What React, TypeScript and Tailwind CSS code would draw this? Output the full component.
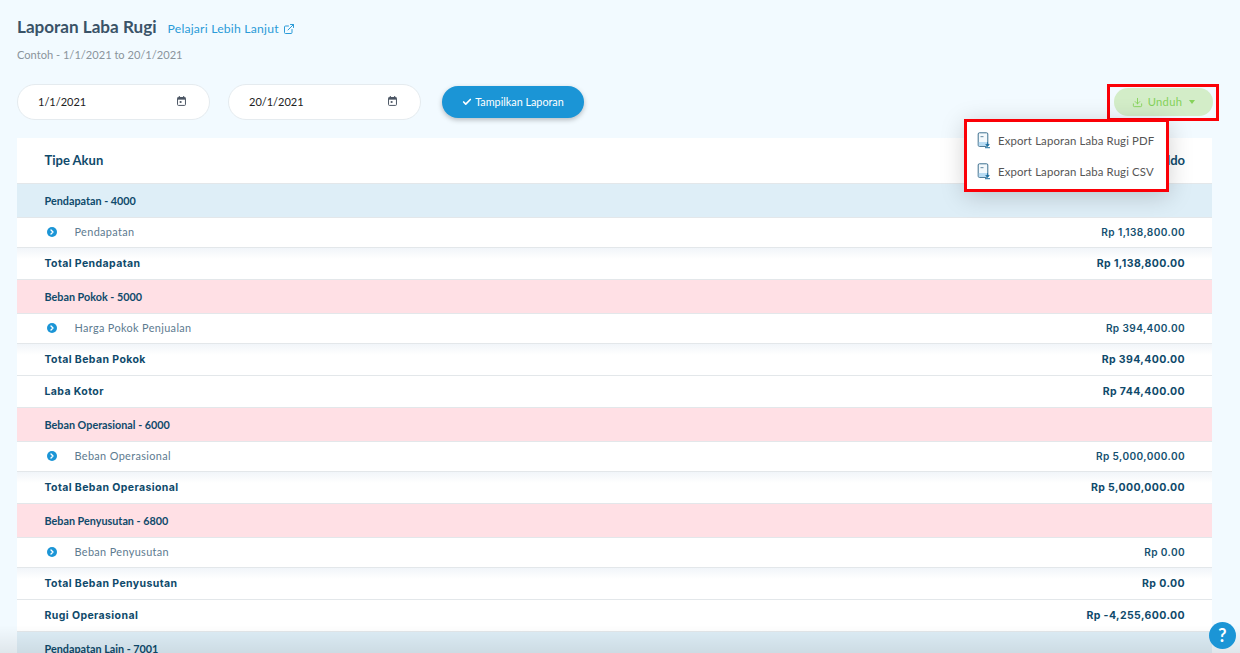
import { Check, ExternalLink, Download, ChevronRight } from "lucide-react";

const lato = { fontFamily: "Lato, sans-serif" };

function CalendarIcon() {
  return (
    <svg width="9" height="10" viewBox="0 0 10 11" className="mr-[5px] mb-[2px]">
      <rect x="0.6" y="1.6" width="8.8" height="8.8" rx="1" fill="none" stroke="#4b5563" strokeWidth="1.1" />
      <rect x="0.6" y="1.6" width="8.8" height="2.4" fill="#4b5563" />
      <rect x="2" y="0" width="1.2" height="2" fill="#4b5563" />
      <rect x="6.8" y="0" width="1.2" height="2" fill="#4b5563" />
      <rect x="3" y="5.6" width="2" height="2" fill="#4b5563" />
    </svg>
  );
}

function DateField({ value }: { value: string }) {
  return (
    <div className="w-[193px] h-[36px] bg-white rounded-full border border-[#e5ebef] flex items-center justify-between pl-[20px] pr-[18px] text-[11px] text-[#222]">
      <span className="font-['Lato',sans-serif]">{value}</span>
      <CalendarIcon />
    </div>
  );
}

function FileIcon() {
  return (
    <svg width="14" height="17" viewBox="0 0 14 17" className="shrink-0">
      <rect x="1.2" y="0.8" width="9.6" height="13.6" rx="1.2" fill="#f4f9fc" stroke="#3d6f8f" strokeWidth="1" />
      <rect x="3.5" y="4" width="3" height="1.2" fill="#7b9bb0" />
      <rect x="1.8" y="10" width="8.4" height="4" fill="#b9dcf3" />
      <path d="M10.5 10v3M8.8 12.4l1.7 2 1.7-2z" fill="#1d6f9f" stroke="#1d6f9f" strokeWidth="0.8" />
      <rect x="8" y="15.2" width="5" height="1" fill="#1d6f9f" />
    </svg>
  );
}

function Section({ label, tone }: { label: string; tone: "blue" | "red" }) {
  return (
    <div
      className={`h-[34px] flex items-center pt-[2px] pl-[27.5px] pr-[27px] border-b border-[#e3e7ea] text-[10.8px] font-bold text-[#0f4a6b] font-['Lato',sans-serif] ${
        tone === "blue" ? "bg-[#deeef7]" : "bg-[#ffe0e5]"
      }`}
    >
      {label}
    </div>
  );
}

function AccountRow({ label, amount }: { label: string; amount: string }) {
  return (
    <div className="h-[30px] bg-white flex items-center justify-between pl-[29.5px] pr-[27px] border-b border-[#e3e7ea]">
      <div className="flex items-center">
        <span className="w-[10px] h-[10px] rounded-full bg-[#1b95d6] flex items-center justify-center">
          <ChevronRight size={8} color="white" strokeWidth={4} />
        </span>
        <span className="ml-[18px] text-[10.9px] tracking-[0.35px] text-[#5d7b90] font-['Lato',sans-serif]">{label}</span>
      </div>
      <span className="text-[10.1px] font-semibold tracking-[0.4px] text-[#14506f] font-['Inter',sans-serif]">{amount}</span>
    </div>
  );
}

function TotalRow({ label, amount, shaded }: { label: string; amount: string; shaded?: boolean }) {
  return (
    <div
      className={`h-[32px] flex items-center justify-between pl-[27.5px] pr-[27px] border-b border-[#e3e7ea] text-[10.5px] font-bold tracking-[0.4px] text-[#0f4a6b] font-['Inter',sans-serif] ${
        shaded ? "bg-[linear-gradient(#f1f5f9,#ffffff_35%)]" : "bg-white"
      }`}
    >
      <span>{label}</span>
      <span>{amount}</span>
    </div>
  );
}

export default function App() {
  return (
    <div className="relative h-[653px] overflow-hidden bg-[#f2faff]" style={lato}>
      <div className="pl-[17px] pr-[28px] pt-[16px]">
        <div className="flex items-baseline h-[22px]">
          <h1 className="text-[17.1px] leading-[22px] font-bold text-[#3a5368]">Laporan Laba Rugi</h1>
          <a className="ml-[11px] text-[12.2px] leading-[16px] tracking-[0.2px] text-[#2b9bd8] flex items-center gap-[4px]">
            Pelajari Lebih Lanjut
            <ExternalLink size={12} />
          </a>
        </div>
        <p className="mt-[10px] text-[11.1px] leading-[14px] text-[#8a949c]">Contoh - 1/1/2021 to 20/1/2021</p>

        <div className="mt-[22px] flex items-center h-[36px]">
          <DateField value="1/1/2021" />
          <div className="w-[18px]" />
          <DateField value="20/1/2021" />
          <button className="ml-[21px] w-[142px] h-[32px] rounded-full bg-[#1b95d6] shadow-[0_2px_5px_rgba(0,0,0,0.25)] flex items-center justify-center gap-[3px] text-white text-[10.8px]">
            <Check size={10} strokeWidth={4} />
            Tampilkan Laporan
          </button>
          <button className="ml-auto mr-[-1px] w-[99px] h-[28px] rounded-full bg-[#d3edc8] flex items-center justify-center gap-[5px] text-[#85d25a] text-[11.2px] tracking-[0.3px]">
            <Download size={11} />
            Unduh
            <span className="ml-[2px] w-0 h-0 border-x-[3.5px] border-x-transparent border-t-[4px] border-t-[#85d25a]" />
          </button>
        </div>

        <div className="mt-[18px]">
          <div className="h-[46px] bg-white flex items-center justify-between pl-[27.5px] pr-[27px] border-b border-[#e3e7ea] text-[13px] font-bold text-[#0f4a6b]">
            <span>Tipe Akun</span>
            <span>Saldo</span>
          </div>
          <Section label="Pendapatan - 4000" tone="blue" />
          <AccountRow label="Pendapatan" amount="Rp 1,138,800.00" />
          <TotalRow shaded label="Total Pendapatan" amount="Rp 1,138,800.00" />
          <Section label="Beban Pokok - 5000" tone="red" />
          <AccountRow label="Harga Pokok Penjualan" amount="Rp 394,400.00" />
          <TotalRow shaded label="Total Beban Pokok" amount="Rp 394,400.00" />
          <TotalRow label="Laba Kotor" amount="Rp 744,400.00" />
          <Section label="Beban Operasional - 6000" tone="red" />
          <AccountRow label="Beban Operasional" amount="Rp 5,000,000.00" />
          <TotalRow shaded label="Total Beban Operasional" amount="Rp 5,000,000.00" />
          <Section label="Beban Penyusutan - 6800" tone="red" />
          <AccountRow label="Beban Penyusutan" amount="Rp 0.00" />
          <TotalRow shaded label="Total Beban Penyusutan" amount="Rp 0.00" />
          <TotalRow label="Rugi Operasional" amount="Rp -4,255,600.00" />
          <Section label="Pendapatan Lain - 7001" tone="blue" />
        </div>
      </div>

      {/* highlight around the download button */}
      <div className="absolute left-[1107px] top-[84px] w-[112px] h-[37px] border-[3px] border-[#fb0007]" />

      {/* export menu */}
      <div className="absolute left-[964px] top-[119px] w-[205px] h-[73px] bg-white border-[3px] border-[#fb0007] shadow-[0_4px_24px_rgba(0,0,0,0.18)] flex flex-col justify-center gap-[14px] pt-[1px] pl-[10px] text-[11.35px] tracking-[0.15px] text-[#555]">
        <div className="flex items-center gap-[7px] h-[17px]">
          <FileIcon />
          <span>Export Laporan Laba Rugi PDF</span>
        </div>
        <div className="flex items-center gap-[7px] h-[17px]">
          <FileIcon />
          <span>Export Laporan Laba Rugi CSV</span>
        </div>
      </div>

      {/* bottom fade */}
      <div className="absolute left-0 right-0 bottom-0 h-[28px] bg-gradient-to-b from-transparent to-[#00000014] pointer-events-none" />

      <div className="absolute left-[1209px] top-[622px] w-[27px] h-[27px] rounded-full bg-[#1b95d6] flex items-center justify-center text-white text-[18px] font-bold">
        ?
      </div>
    </div>
  );
}
